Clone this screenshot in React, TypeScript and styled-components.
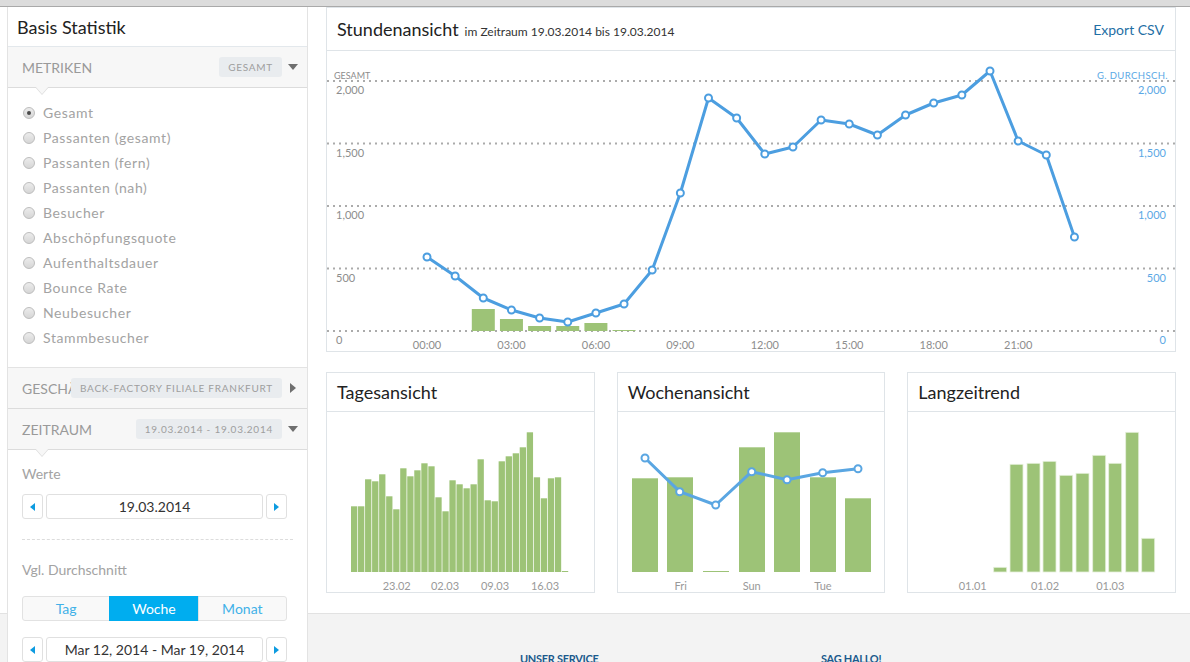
import React from "react";
import styled, { createGlobalStyle, css } from "styled-components";

const GlobalStyle = createGlobalStyle`
  html, body { margin: 0; padding: 0; height: 100%; overflow: hidden; background: #fff; }
  body { font-family: Lato, "Open Sans", "Liberation Sans", sans-serif; color: #333; }
  #root { height: 100%; }
  * { box-sizing: border-box; }
`;

const Page = styled.div`
  height: 100vh;
  display: flex;
  flex-direction: column;
`;

const TopBar = styled.div`
  height: 7px;
  flex-shrink: 0;
  background: #dcdcdc;
  border-bottom: 1px solid #a9a9a9;
`;

const Layout = styled.div`
  flex: 1;
  min-height: 0;
  overflow: hidden;
  display: grid;
  grid-template-columns: 7px 301px 1fr;
  grid-template-rows: auto 1fr;
`;

/* ---------- Sidebar ---------- */

const Sidebar = styled.aside`
  grid-column: 2;
  grid-row: 1 / 3;
  z-index: 1;
  background: #fff;
  border-left: 1px solid #e3e3e3;
  border-right: 1px solid #e3e3e3;
  display: flex;
  flex-direction: column;
  & > * { flex-shrink: 0; }
`;

const SideTitle = styled.div`
  height: 40px;
  display: flex;
  align-items: center;
  padding: 0 9px;
  font-size: 18px;
  color: #222;
  border-bottom: 1px solid #e3e8ec;
`;

const SectionHeader = styled.div<{ $caret?: boolean; $top?: boolean }>`
  position: relative;
  height: 41px;
  display: flex;
  align-items: center;
  padding: 0 9px 0 14px;
  background: #f7f7f7;
  border-bottom: 1px solid #dcdcdc;
  ${(p) =>
    p.$top &&
    css`
      border-top: 1px solid #e3e3e3;
      height: 42px;
    `}
  ${(p) =>
    p.$caret &&
    css`
      &::before,
      &::after {
        content: "";
        position: absolute;
        left: 27px;
        width: 0;
        height: 0;
        border-left: 7px solid transparent;
        border-right: 7px solid transparent;
      }
      &::before {
        top: 100%;
        border-top: 8px solid #dcdcdc;
      }
      &::after {
        top: calc(100% - 1px);
        border-top: 8px solid #f7f7f7;
      }
    `}
`;

const SectionLabel = styled.span`
  flex: 1;
  min-width: 0;
  overflow: hidden;
  white-space: nowrap;
  font-size: 14px;
  color: #9a9a9a;
  text-transform: uppercase;
`;

const Badge = styled.span`
  flex-shrink: 0;
  height: 20px;
  line-height: 20px;
  padding: 0 9px;
  border-radius: 3px;
  background: #e9ecef;
  color: #9e9e9e;
  font-size: 10px;
  letter-spacing: 0.75px;
  text-transform: uppercase;
  white-space: nowrap;
`;

const ArrowBox = styled.span`
  width: 10px;
  margin-left: 6px;
  display: flex;
  align-items: center;
  justify-content: center;
  flex-shrink: 0;
`;

const DownTri = styled.span`
  width: 0;
  height: 0;
  border-left: 5px solid transparent;
  border-right: 5px solid transparent;
  border-top: 6px solid #6f6f6f;
`;

const RightTri = styled.span`
  width: 0;
  height: 0;
  border-top: 5px solid transparent;
  border-bottom: 5px solid transparent;
  border-left: 6px solid #6f6f6f;
`;

const RadioList = styled.div`
  padding: 12px 0 17px 15px;
  display: flex;
  flex-direction: column;
`;

const RadioRow = styled.label`
  height: 25px;
  display: flex;
  align-items: center;
  gap: 8px;
  font-size: 14px;
  color: #a3a3a3;
  letter-spacing: 0.6px;
`;

const RadioDot = styled.span<{ $checked?: boolean }>`
  width: 12px;
  height: 12px;
  border-radius: 50%;
  border: 1px solid #bdbdbd;
  background: linear-gradient(#ececec, #d6d6d6);
  display: flex;
  align-items: center;
  justify-content: center;
  &::after {
    content: "";
    width: 4px;
    height: 4px;
    border-radius: 50%;
    background: ${(p) => (p.$checked ? "#4a4a4a" : "transparent")};
  }
`;

const SideBody = styled.div`
  padding: 14px 20px 20px 14px;
  display: flex;
  flex-direction: column;
`;

const FieldLabel = styled.div<{ $gap?: number }>`
  height: 20px;
  line-height: 20px;
  font-size: 14px;
  color: #a3a3a3;
  margin-bottom: ${(p) => p.$gap ?? 10}px;
`;

const Stepper = styled.div`
  display: grid;
  grid-template-columns: 21px 1fr 21px;
  column-gap: 3px;
  height: 25px;
`;

const StepButton = styled.button`
  border: 1px solid #e0e0e0;
  border-radius: 3px;
  background: #fff;
  padding: 0;
  display: flex;
  align-items: center;
  justify-content: center;
`;

const BlueTri = styled.span<{ $dir: "left" | "right" }>`
  width: 0;
  height: 0;
  border-top: 4.5px solid transparent;
  border-bottom: 4.5px solid transparent;
  ${(p) =>
    p.$dir === "left"
      ? css`border-right: 5px solid #0d9be0;`
      : css`border-left: 5px solid #0d9be0;`}
`;

const StepValue = styled.div`
  border: 1px solid #e0e0e0;
  border-radius: 3px;
  display: flex;
  align-items: center;
  justify-content: center;
  font-size: 14px;
  color: #333;
`;

const Dashed = styled.div`
  margin: 20px -6px 20px 0;
  border-top: 1px dashed #dcdcdc;
`;

const Segmented = styled.div`
  display: grid;
  grid-template-columns: repeat(3, 1fr);
  height: 25px;
  margin-bottom: 16px;
`;

const Segment = styled.div<{ $active?: boolean }>`
  display: flex;
  align-items: center;
  justify-content: center;
  font-size: 14px;
  border: 1px solid #e2e2e2;
  margin-left: -1px;
  &:first-child { margin-left: 0; border-radius: 3px 0 0 3px; }
  &:last-child { border-radius: 0 3px 3px 0; }
  background: ${(p) => (p.$active ? "#00adef" : "#f9f9f9")};
  color: ${(p) => (p.$active ? "#fff" : "#41b1e8")};
  ${(p) => p.$active && css`border-color: #00adef;`}
`;

/* ---------- Main ---------- */

const Main = styled.main`
  grid-column: 3;
  grid-row: 1;
  padding: 0 14px 20px 18px;
  display: flex;
  flex-direction: column;
  gap: 20px;
`;

const Card = styled.section`
  border: 1px solid #dfe4e8;
  background: #fff;
`;

const CardHeader = styled.header<{ $h: number }>`
  height: ${(p) => p.$h}px;
  display: flex;
  align-items: center;
  justify-content: space-between;
  padding: 0 11px 0 10px;
  border-bottom: 1px solid #dfe4e8;
`;

const TitleGroup = styled.div`
  display: flex;
  align-items: baseline;
  gap: 6px;
`;

const CardTitle = styled.h2`
  margin: 0;
  font-size: 18px;
  font-weight: 400;
  color: #222;
`;

const CardSub = styled.span`
  font-size: 12px;
  color: #333;
`;

const ExportLink = styled.a`
  font-size: 14px;
  color: #1f6fa5;
  text-decoration: none;
`;

const ChartBox = styled.div<{ $h: number }>`
  height: ${(p) => p.$h}px;
  overflow: hidden;
  svg { display: block; font-family: Lato, "Open Sans", sans-serif; }
`;

const CardRow = styled.div`
  display: grid;
  grid-template-columns: repeat(3, 1fr);
  gap: 22px;
`;

/* ---------- Footer ---------- */

const Footer = styled.footer`
  grid-column: 1 / -1;
  grid-row: 2;
  background: #f3f3f3;
  border-top: 1px solid #e2e2e2;
  min-height: 60px;
  padding: 38px 0 0 520px;
  display: flex;
`;

const FooterCol = styled.div`
  width: 301px;
  font-size: 11px;
  font-weight: 700;
  color: #1b5a8c;
  letter-spacing: -0.3px;
`;

/* ---------- Data ---------- */

const GREEN = "#9dc377";
const BLUE = "#4c9ee0";

const mainLine = [257, 276, 298, 310, 318, 322, 313, 304, 270, 193, 98, 118, 154, 147, 120, 124, 135, 115, 103, 95, 71, 141, 155, 237].map(
  (y) => y - 51
);
const hx = (h: number) => 100 + 28.15 * h;
const mainBars: [number, number][] = [
  [2, 22],
  [3, 12],
  [4, 5],
  [5, 5],
  [6, 8],
  [7, 1],
];
const grid = [30, 92.5, 155, 217.5, 280];
const yLabels = ["2,000", "1,500", "1,000", "500", "0"];

const tages = [65.7, 65.7, 92.7, 90.7, 97.7, 75.7, 62.7, 103.7, 95.7, 101.7, 108.7, 105.7, 74.7, 60.7, 91.7, 87.7, 83.7, 87.7, 112.7, 71.7, 70.7, 110.7, 115.7, 118.7, 124.7, 139.7, 94.7, 73.7, 93.7, 94.7, 1];
const woche = [93.7, 94.7, 1, 124.7, 139.7, 94.7, 73.7];
const wocheX = [14, 49, 85, 121, 156, 192, 227];
const wocheLine: [number, number][] = [
  [27, 46],
  [61.7, 79.7],
  [97.7, 93],
  [133.7, 59.7],
  [169, 67.7],
  [204.7, 60.7],
  [240, 56.7],
];
const lang = [4.7, 107.7, 108.7, 110.7, 96.7, 98.7, 116.7, 108.7, 139.7, 33.7];
const langX = [85.7, 102, 119, 135, 151.7, 168, 184.7, 200.7, 217.7, 233.7];

const AXIS = "#8d8d8d";

function MainChart() {
  return (
    <svg width={848} height={300}>
      {grid.map((y) => (
        <line key={y} x1={0} x2={848} y1={y} y2={y} stroke="#ababab" strokeWidth={2} strokeDasharray="2 4" />
      ))}
      {mainBars.map(([h, v]) => (
        <rect key={h} x={hx(h) - 11.5} y={280 - v} width={23} height={v} fill={GREEN} />
      ))}
      <polyline
        points={mainLine.map((y, h) => `${hx(h)},${y}`).join(" ")}
        fill="none"
        stroke={BLUE}
        strokeWidth={3}
        strokeLinejoin="round"
      />
      {mainLine.map((y, h) => (
        <circle key={h} cx={hx(h)} cy={y} r={3.5} fill="#fff" stroke={BLUE} strokeWidth={2} />
      ))}
      <text x={7} y={27.5} fontSize={9} fill={AXIS}>
        GESAMT
      </text>
      <text x={841} y={27.5} fontSize={9.5} fill="#5ba8e5" textAnchor="end" letterSpacing={0.4}>
        G. DURCHSCH.
      </text>
      {yLabels.map((t, i) => (
        <React.Fragment key={t}>
          <text x={9} y={43.3 + 62.5 * i} fontSize={11} fill={AXIS}>
            {t}
          </text>
          <text x={839} y={43.3 + 62.5 * i} fontSize={11} fill="#5ba8e5" textAnchor="end">
            {t}
          </text>
        </React.Fragment>
      ))}
      {[0, 3, 6, 9, 12, 15, 18, 21].map((h) => (
        <text key={h} x={hx(h)} y={298} fontSize={11} fill={AXIS} textAnchor="middle">
          {String(h).padStart(2, "0")}:00
        </text>
      ))}
    </svg>
  );
}

function TagesChart() {
  return (
    <svg width="100%" height={180}>
      {tages.map((v, i) => (
        <rect key={i} x={24 + i * 7.03} y={160 - v} width={6.3} height={v} fill={GREEN} />
      ))}
      {[
        ["23.02", 69.7],
        ["02.03", 118],
        ["09.03", 168],
        ["16.03", 218],
      ].map(([t, x]) => (
        <text key={t as string} x={x as number} y={178} fontSize={11} fill="#999" textAnchor="middle">
          {t}
        </text>
      ))}
    </svg>
  );
}

function WocheChart() {
  return (
    <svg width="100%" height={180}>
      {woche.map((v, i) => (
        <rect key={i} x={wocheX[i]} y={160 - v} width={26} height={v} fill={GREEN} />
      ))}
      <polyline
        points={wocheLine.map(([x, y]) => `${x},${y}`).join(" ")}
        fill="none"
        stroke="#5aa6e2"
        strokeWidth={3}
        strokeLinejoin="round"
      />
      {wocheLine.map(([x, y], i) => (
        <circle key={i} cx={x} cy={y} r={3.5} fill="#fff" stroke="#5aa6e2" strokeWidth={2} />
      ))}
      {[
        ["Fri", 62.7],
        ["Sun", 133.7],
        ["Tue", 205],
      ].map(([t, x]) => (
        <text key={t as string} x={x as number} y={178} fontSize={11} fill="#999" textAnchor="middle">
          {t}
        </text>
      ))}
    </svg>
  );
}

function LangChart() {
  return (
    <svg width="100%" height={180}>
      {lang.map((v, i) => (
        <rect key={i} x={langX[i]} y={160 - v} width={13} height={v} fill={GREEN} stroke="#e6efdc" strokeWidth={0.8} />
      ))}
      {[
        ["01.01", 64.7],
        ["01.02", 137],
        ["01.03", 202.3],
      ].map(([t, x]) => (
        <text key={t as string} x={x as number} y={178} fontSize={11} fill="#999" textAnchor="middle">
          {t}
        </text>
      ))}
    </svg>
  );
}

const metrics = [
  "Gesamt",
  "Passanten (gesamt)",
  "Passanten (fern)",
  "Passanten (nah)",
  "Besucher",
  "Abschöpfungsquote",
  "Aufenthaltsdauer",
  "Bounce Rate",
  "Neubesucher",
  "Stammbesucher",
];

function DateStepper({ value }: { value: string }) {
  return (
    <Stepper>
      <StepButton>
        <BlueTri $dir="left" />
      </StepButton>
      <StepValue>{value}</StepValue>
      <StepButton>
        <BlueTri $dir="right" />
      </StepButton>
    </Stepper>
  );
}

function SmallCard({ title, children }: { title: string; children: React.ReactNode }) {
  return (
    <Card>
      <CardHeader $h={39}>
        <CardTitle>{title}</CardTitle>
      </CardHeader>
      <ChartBox $h={180}>{children}</ChartBox>
    </Card>
  );
}

export default function App() {
  return (
    <Page>
      <GlobalStyle />
      <TopBar />
      <Layout>
        <Sidebar>
          <SideTitle>Basis Statistik</SideTitle>
          <SectionHeader $caret>
            <SectionLabel>Metriken</SectionLabel>
            <Badge>Gesamt</Badge>
            <ArrowBox>
              <DownTri />
            </ArrowBox>
          </SectionHeader>
          <RadioList>
            {metrics.map((m, i) => (
              <RadioRow key={m}>
                <RadioDot $checked={i === 0} />
                {m}
              </RadioRow>
            ))}
          </RadioList>
          <SectionHeader $top>
            <SectionLabel>Geschäft</SectionLabel>
            <Badge>Back-Factory Filiale Frankfurt</Badge>
            <ArrowBox>
              <RightTri />
            </ArrowBox>
          </SectionHeader>
          <SectionHeader $caret>
            <SectionLabel>Zeitraum</SectionLabel>
            <Badge>19.03.2014 - 19.03.2014</Badge>
            <ArrowBox>
              <DownTri />
            </ArrowBox>
          </SectionHeader>
          <SideBody>
            <FieldLabel>Werte</FieldLabel>
            <DateStepper value="19.03.2014" />
            <Dashed />
            <FieldLabel $gap={16}>Vgl. Durchschnitt</FieldLabel>
            <Segmented>
              <Segment>Tag</Segment>
              <Segment $active>Woche</Segment>
              <Segment>Monat</Segment>
            </Segmented>
            <DateStepper value="Mar 12, 2014 - Mar 19, 2014" />
          </SideBody>
        </Sidebar>

        <Main>
          <Card>
            <CardHeader $h={43}>
              <TitleGroup>
                <CardTitle>Stundenansicht</CardTitle>
                <CardSub>im Zeitraum 19.03.2014 bis 19.03.2014</CardSub>
              </TitleGroup>
              <ExportLink href="#">Export CSV</ExportLink>
            </CardHeader>
            <ChartBox $h={300}>
              <MainChart />
            </ChartBox>
          </Card>
          <CardRow>
            <SmallCard title="Tagesansicht">
              <TagesChart />
            </SmallCard>
            <SmallCard title="Wochenansicht">
              <WocheChart />
            </SmallCard>
            <SmallCard title="Langzeitrend">
              <LangChart />
            </SmallCard>
          </CardRow>
        </Main>

        <Footer>
          <FooterCol>UNSER SERVICE</FooterCol>
          <FooterCol>SAG HALLO!</FooterCol>
        </Footer>
      </Layout>
    </Page>
  );
}
